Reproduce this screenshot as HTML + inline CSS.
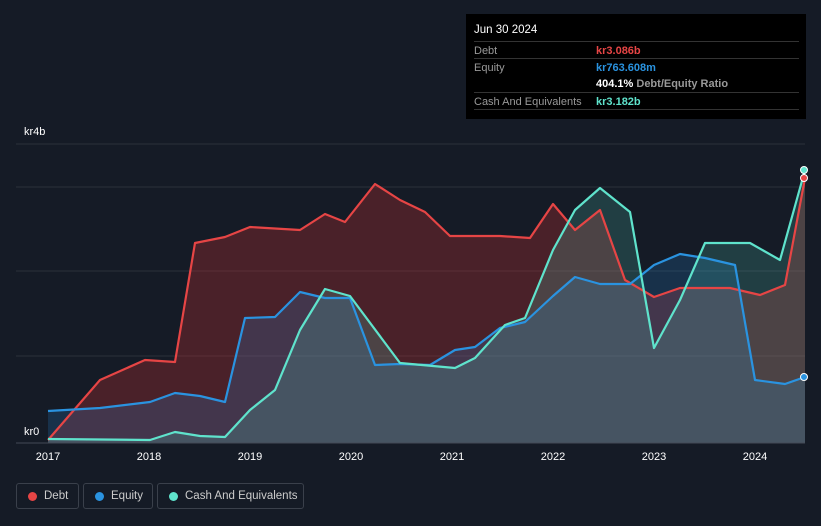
<!DOCTYPE html>
<html><head><style>
body{margin:0;width:821px;height:526px;background:#151b26;font-family:"Liberation Sans",sans-serif;overflow:hidden;position:relative;color:#fff}
.tt{position:absolute;left:466px;top:14px;width:340px;height:105px;background:#000;font-size:11px}
.tt .h{position:absolute;left:8px;top:10px;color:#fff;font-size:11.5px}
.row{position:absolute;left:8px;width:325px;border-top:1px solid #333;height:17px}
.row span{position:absolute;top:3px}
.lbl{left:0;color:#999}
.val{left:122px;font-weight:bold}
.leg{position:absolute;top:483px;height:26px;border:1px solid #3a404b;border-radius:3px;font-size:11.5px;color:#ccc;box-sizing:border-box;line-height:24px}
.leg i{position:absolute;left:11px;top:8px;width:9px;height:9px;border-radius:50%}
.leg span{position:absolute;left:27px}
</style></head><body>
<svg width="821" height="526" style="position:absolute;left:0;top:0">
<line x1="16" y1="144" x2="805" y2="144" stroke="#2a303b"/>
<line x1="16" y1="187" x2="805" y2="187" stroke="#2a303b"/>
<line x1="16" y1="271" x2="805" y2="271" stroke="#2a303b"/>
<line x1="16" y1="356" x2="805" y2="356" stroke="#2a303b"/>
<polygon fill="rgba(200,50,50,0.3)" points="48,440 100,380 145,360 175,362 195,243 225,237 250,227 300,230 325,214 345,222 375,184 400,200 425,212 450,236 500,236 530,238 553,204 575,230 600,210 625,280 654,297 680,288 730,288 760,295 785,285 805,178 805,443 48,443"/>
<polygon fill="rgba(40,140,220,0.2)" points="48,411 100,408 150,402 175,393 200,396 225,402 245,318 275,317 300,292 325,298 350,298 375,365 400,364 430,365 455,350 475,347 500,328 525,322 553,296 575,277 600,284 630,284 654,265 680,254 705,258 735,265 755,380 785,384 805,377 805,443 48,443"/>
<polygon fill="rgba(90,220,200,0.18)" points="48,439 150,440 175,432 200,436 225,437 250,410 275,390 300,330 325,289 350,296 400,363 455,368 475,358 505,325 525,318 553,250 575,210 600,188 630,212 654,348 680,300 705,243 750,243 780,260 805,170 805,443 48,443"/>
<polyline fill="none" stroke="#e64545" stroke-width="2.2" stroke-linejoin="round" points="48,440 100,380 145,360 175,362 195,243 225,237 250,227 300,230 325,214 345,222 375,184 400,200 425,212 450,236 500,236 530,238 553,204 575,230 600,210 625,280 654,297 680,288 730,288 760,295 785,285 805,178"/>
<polyline fill="none" stroke="#2a93e0" stroke-width="2.2" stroke-linejoin="round" points="48,411 100,408 150,402 175,393 200,396 225,402 245,318 275,317 300,292 325,298 350,298 375,365 400,364 430,365 455,350 475,347 500,328 525,322 553,296 575,277 600,284 630,284 654,265 680,254 705,258 735,265 755,380 785,384 805,377"/>
<polyline fill="none" stroke="#5fe3cc" stroke-width="2.2" stroke-linejoin="round" points="48,439 150,440 175,432 200,436 225,437 250,410 275,390 300,330 325,289 350,296 400,363 455,368 475,358 505,325 525,318 553,250 575,210 600,188 630,212 654,348 680,300 705,243 750,243 780,260 805,170"/>
<line x1="16" y1="443" x2="805" y2="443" stroke="#444a55"/>
<circle cx="804" cy="178" r="3.5" fill="#e64545" stroke="#fff" stroke-width="1"/>
<circle cx="804" cy="170" r="3.5" fill="#5fe3cc" stroke="#fff" stroke-width="1"/>
<circle cx="804" cy="377" r="3.5" fill="#2a93e0" stroke="#fff" stroke-width="1"/>
<g font-size="11" fill="#fff" font-family="Liberation Sans">
<text x="24" y="135">kr4b</text><text x="24" y="435">kr0</text>
<g text-anchor="middle"><text x="48" y="460">2017</text><text x="149" y="460">2018</text><text x="250" y="460">2019</text><text x="351" y="460">2020</text><text x="452" y="460">2021</text><text x="553" y="460">2022</text><text x="654" y="460">2023</text><text x="755" y="460">2024</text></g>
</g>
</svg>
<div class="tt">
<div class="h">Jun 30 2024</div>
<div class="row" style="top:27px"><span class="lbl">Debt</span><span class="val" style="color:#e64545">kr3.086b</span></div>
<div class="row" style="top:44px"><span class="lbl">Equity</span><span class="val" style="color:#2a93e0">kr763.608m</span></div>
<div class="row" style="top:61px;border-top:none"><span class="val" style="color:#fff">404.1% <b style="color:#999">Debt/Equity Ratio</b></span></div>
<div class="row" style="top:78px"><span class="lbl">Cash And Equivalents</span><span class="val" style="color:#5fe3cc">kr3.182b</span></div>
<div class="row" style="top:95px;height:0"></div>
</div>
<div class="leg" style="left:16px;width:63px"><i style="background:#e64545"></i><span>Debt</span></div>
<div class="leg" style="left:83px;width:70px"><i style="background:#2a93e0"></i><span>Equity</span></div>
<div class="leg" style="left:157px;width:147px"><i style="background:#5fe3cc"></i><span>Cash And Equivalents</span></div>
</body></html>
